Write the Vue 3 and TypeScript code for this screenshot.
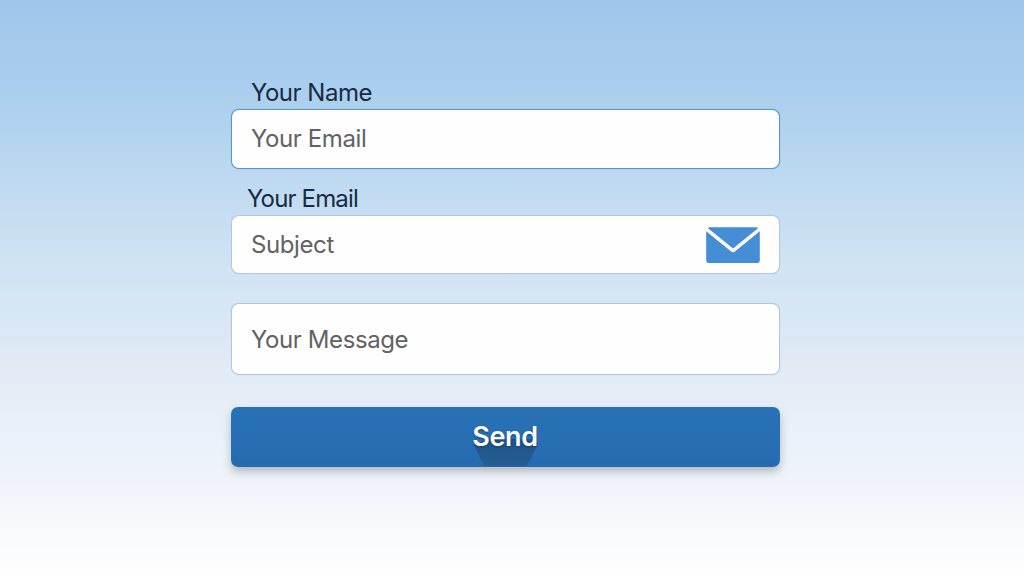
<script setup lang="ts">
import { ref } from 'vue'

const email = ref('')
const subject = ref('')
const message = ref('')
</script>

<template>
  <main class="page">
    <form class="form" @submit.prevent>
      <label class="label name-label" for="first">Your Name</label>
      <div class="field focused">
        <input id="first" v-model="email" class="input email" type="text" placeholder="Your Email" />
      </div>
      <label class="label email-label" for="second">Your Email</label>
      <div class="field subject">
        <input id="second" v-model="subject" class="input" type="text" placeholder="Subject" />
        <svg class="mail" width="54" height="37" viewBox="0 0 54 37" aria-hidden="true">
          <path d="M3 0.3H51L52 1.2L27 21.4L2 1.2Z" fill="#458dd5" />
          <path d="M0.2 4.2L25.8 24.9Q27 25.8 28.2 24.9L53.8 4.2V33.3Q53.8 36 51.1 36H2.9Q0.2 36 0.2 33.3Z" fill="#458dd5" />
        </svg>
      </div>
      <div class="field message">
        <input v-model="message" class="input" type="text" placeholder="Your Message" aria-label="Your Message" />
      </div>
      <button class="send" type="submit">
        <svg class="cast" width="72" height="31" viewBox="0 0 72 31" aria-hidden="true">
          <defs>
            <linearGradient id="cast-fill" x1="0" y1="0" x2="0" y2="1">
              <stop offset="0" stop-color="#1d4c7a" stop-opacity="0.75" />
              <stop offset="1" stop-color="#245a8e" stop-opacity="0.8" />
            </linearGradient>
          </defs>
          <path d="M4 10L18 4H64L68 9L57 31H14Z" fill="url(#cast-fill)" />
        </svg>
        <span class="send-text">Send</span>
      </button>
    </form>
  </main>
</template>

<style>
body {
  margin: 0;
}
</style>

<style scoped>
.page {
  box-sizing: border-box;
  width: 1024px;
  height: 576px;
  padding: 75px 0 0 231px;
  overflow: hidden;
  background: linear-gradient(180deg, #9fc6eb 0%, #a9cdee 14%, #b5d5ef 25%, #c3dcf2 35%, #d1e4f3 47%, #dde9f5 60%, #e8f0f8 73%, #f0f4fa 84%, #f8fafb 92%, #fefefe 100%);
  font-family: Inter, "Liberation Sans", sans-serif;
}
.form {
  display: flex;
  flex-direction: column;
  width: 549px;
}
.label {
  box-sizing: border-box;
  height: 34px;
  padding-top: 1px;
  font-size: 24px;
  font-weight: 400;
  line-height: 34px;
  letter-spacing: -0.5px;
  color: #182b42;
  white-space: nowrap;
}
.name-label {
  padding-left: 20px;
}
.email-label {
  margin-top: 12px;
  padding-left: 16px;
  letter-spacing: -0.85px;
}
.field {
  display: flex;
  align-items: center;
  box-sizing: border-box;
  height: 59px;
  padding: 0 18px 0 19px;
  border: 1px solid #b4c9df;
  border-radius: 8px;
  background: #fefefe;
  box-shadow: 0 0 1px #b4c9df;
}
.focused {
  height: 60px;
  padding-bottom: 2px;
  border-color: #5b95cc;
  box-shadow: 0 0 1px #5b95cc;
}
.message {
  height: 72px;
  margin-top: 29px;
  border-color: #b3c6da;
}
.subject {
  padding-right: 19px;
}
.mail {
  margin-top: 1px;
}
.input {
  flex: 1;
  min-width: 0;
  height: 34px;
  padding: 0;
  border: 0;
  outline: 0;
  background: transparent;
  font-family: inherit;
  font-size: 24px;
  font-weight: 400;
  letter-spacing: -0.4px;
  color: #555;
}
.input::placeholder {
  color: #626264;
  opacity: 1;
}
.send {
  position: relative;
  height: 60px;
  margin-top: 32px;
  padding: 0;
  border: 0;
  border-radius: 7px;
  background: linear-gradient(180deg, #2972b6, #266baf);
  box-shadow: 0 5px 8px rgba(80, 85, 95, 0.36);
  font-family: inherit;
  font-size: 27px;
  font-weight: 600;
  letter-spacing: -0.4px;
  line-height: 60px;
  color: #fff;
}
.cast {
  position: absolute;
  left: 239px;
  bottom: 1px;
}
.send-text {
  position: relative;
  left: -0.5px;
  text-shadow: 0 1px 2px rgba(15, 50, 90, 0.7);
}
</style>
